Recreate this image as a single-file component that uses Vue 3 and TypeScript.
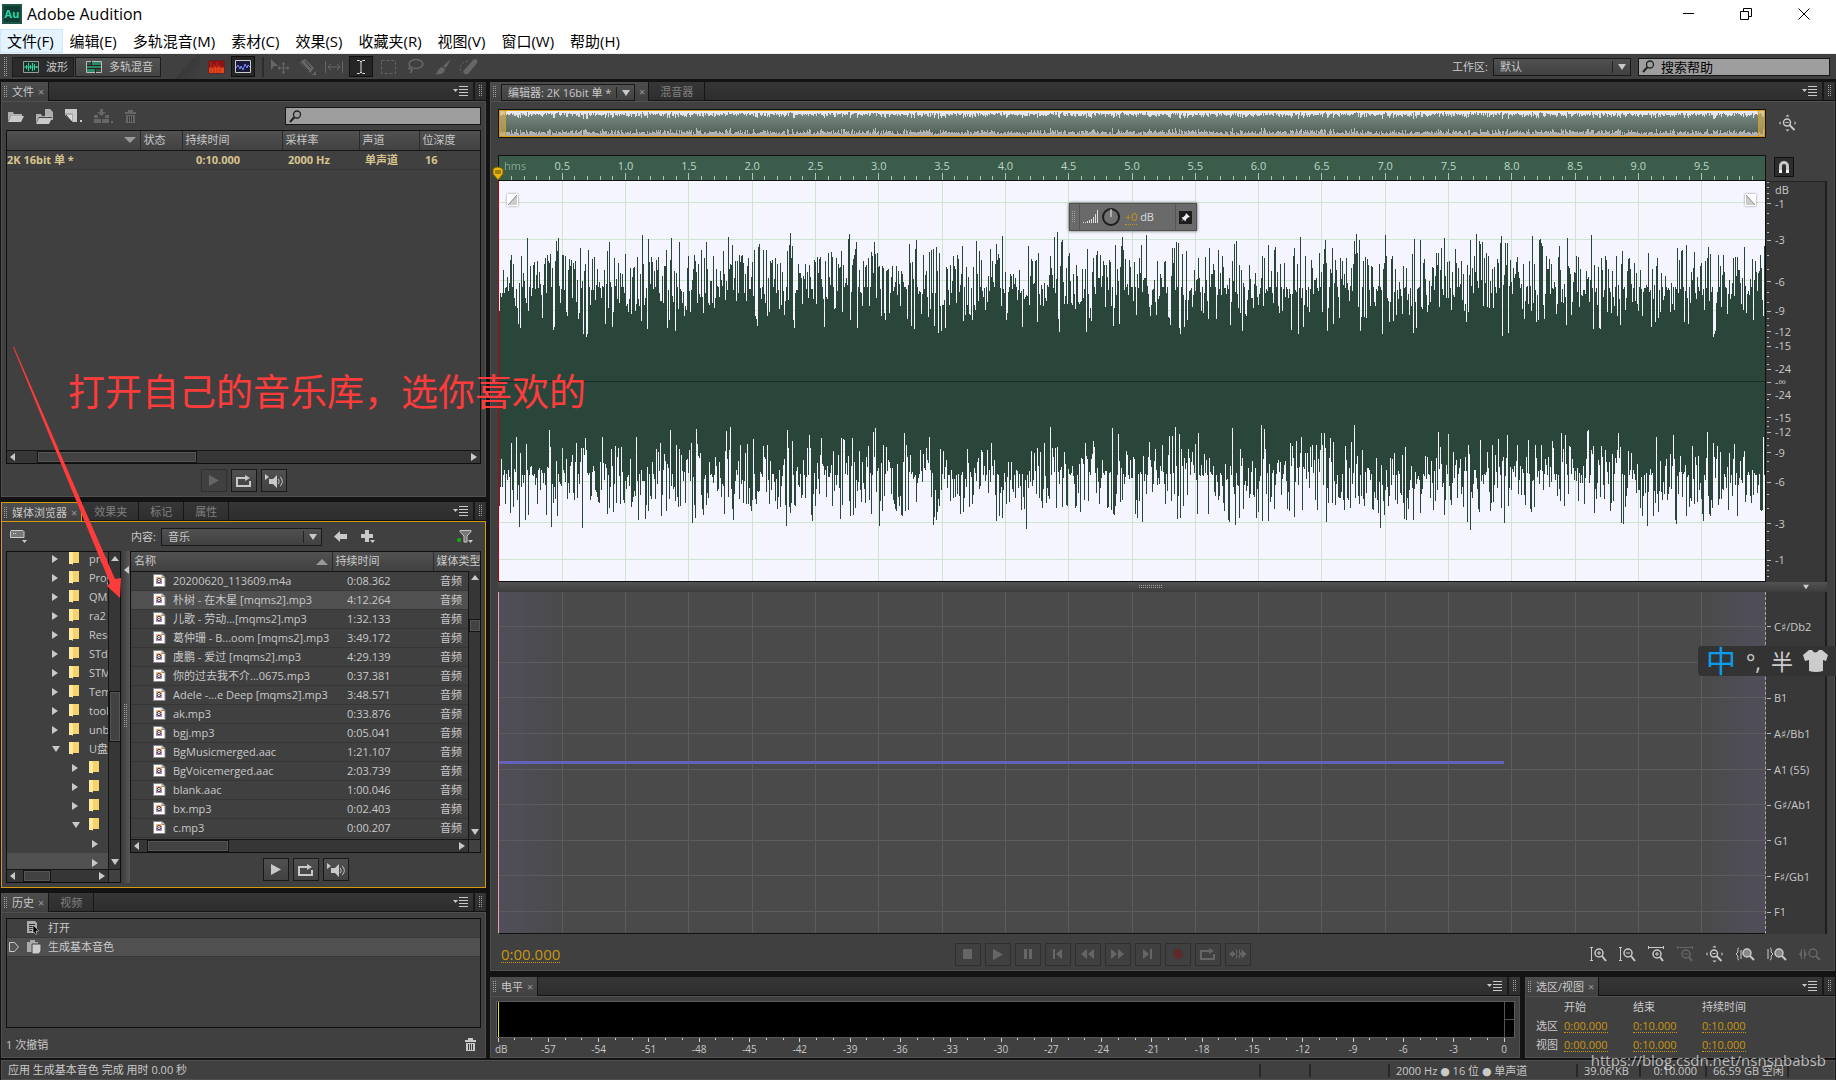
<script setup lang="ts">
import { h } from 'vue'

const icons: Record<string, string> = {
  min: '<path d="M0 5.500h11" stroke="currentColor" fill="none"/>',
  max: '<path d="M.5 3.500h8v8h-8zM3.500 3.500v-3h8v8h-3" stroke="currentColor" fill="none"/>',
  close: '<path d="M.5.5l11 11M11.500.5l-11 11" stroke="currentColor" fill="none"/>',
  wave: '<path d="M.5.500h15v11h-15z" fill="#17352a" stroke="#999"/><path d="M1 6h14M3.500 4v4M5.500 2v8M7.500 4v4M9.500 2v8M11.500 3v6M13.500 5v2" stroke="#35d19a" fill="none"/>',
  multi: '<path d="M.5.500h15v11h-15z" fill="#2a8a66" stroke="#bbb"/><path d="M1 4h14v1H1zM1 7h14v1H1zM5 0h1v4H5zM9 8h1v4H9z" fill="#222"/><path d="M1 1h4v3H1zM10 8h5v3h-5z" fill="#3d4d46"/>',
  spectral: '<path d="M0 0h17v14H0z" fill="#8e1212"/><path d="M1 8l2-1 2 1 2-2 2 2 2-2 2 2 2-1 1 1v5H1z" fill="#e0481b"/><path d="M3 2v11M6 4v9M9 2v11M12 5v8" stroke="#c22c14" fill="none"/><path d="M.5.500h16v13H.5z" fill="none" stroke="#5e2626"/>',
  wavebtn: '<path d="M.5.500h15v12h-15z" fill="#191a3a" stroke="#ccc"/><path d="M1 8l2-3 2 4 1-3 2 4 2-6 2 4 1-3 2 2" stroke="#7b8cff" fill="none"/>',
  move: '<path d="M0 1l7 7H3l-3 4z"/><path d="M12.500 5v10M7.500 10h10" stroke="currentColor"/><path d="M10.500 6.500l2-2.500 2 2.500zM10.500 13.500l2 2.500 2-2.500zM9 8l-2.500 2L9 12zM16 8l2.500 2-2.500 2z"/>',
  razor: '<path d="M1 4l6-3 9 9-4 5z"/><path d="M0 1l5 6M7 3l6 7M5 7l6 6" stroke="#333" fill="none"/><path d="M18 13v4h-4z"/>',
  slip: '<path d="M.5 2v12M17.500 2v12M3 8h12M6 5L3 8l3 3M12 5l3 3-3 3" stroke="currentColor" fill="none"/>',
  ibeam: '<path d="M1 1.500h2.500L5 3v10l-1.500 1.500H1M9 1.500H6.500L5 3M5 13l1.500 1.500H9" stroke="currentColor" fill="none"/>',
  marquee: '<path d="M.5.500h14v13H.5z" stroke="currentColor" fill="none" stroke-dasharray="3 2"/>',
  lasso: '<ellipse cx="9" cy="5" rx="7" ry="4.500" fill="none" stroke="currentColor" stroke-width="1.500"/><path d="M3 8c-2 1-1 3 1 2 2 0 1 2-1 4" fill="none" stroke="currentColor" stroke-width="1.500"/>',
  brush: '<path d="M17 0l-5 9-3-2zM8 8l3 2c0 4-4 6-10 5 3-1 3-6 7-7z"/>',
  heal: '<path d="M8 8L14 1c2-2 6 0 4 3l-8 10c-3 3-7 0-5-3z"/><path d="M9 2c-5 1-8 4-8 8 0 2 1 3 2 4" fill="none" stroke="currentColor" stroke-dasharray="2 2"/>',
  search: '<circle cx="8" cy="4.500" r="3.500" fill="none" stroke="currentColor" stroke-width="1.300"/><path d="M5.500 7L1 12" stroke="currentColor" stroke-width="2"/>',
  menu: '<path d="M0 3h5L2.500 6z"/><path d="M6 .5h9M6 3.500h9M6 6.500h9M6 9.500h9" stroke="currentColor" fill="none" shape-rendering="crispEdges"/>',
  folder: '<path d="M0 2h5l1 2h8v2H3L0 11z" opacity=".8"/><path d="M3 6h13l-3 6H0z"/>',
  folderdoc: '<path d="M0 5h5l1 2h7v1H3L0 14z" opacity=".8"/><path d="M3 9h13l-3 6H0z"/><path d="M9 0h5l3 3v8h-2l1-3H9z" opacity=".8"/>',
  newfile: '<path d="M0 0h12v13H7L0 6z" fill="#aaa"/><path d="M0 0h12v13H8V4H0z"/><path d="M1 6l6 7V6z" fill="#ddd"/><path d="M1 6l6 7" stroke="#333"/><path d="M15 11h2v2h-2z"/>',
  insert: '<path d="M6 0h3v3h3L7.500 7 3 3h3zM0 6h4v3H0zM0 10h7v4H0zM8 10h7v4H8zM11 6h4v3h-4z"/><path d="M17 12h2v2h-2z"/>',
  trash: '<path d="M3 0h5v2h3v2H0V2h3zM1 5h9v8H1z"/><path d="M3.500 6v6M5.500 6v6M7.500 6v6" stroke="#3a3a3a"/>',
  play: '<path d="M0 0l10 5.500L0 11z"/>',
  loop: '<path d="M8 3H1v8h13V6" fill="none" stroke="currentColor" stroke-width="2"/><path d="M6 2h3V0l5 3-5 3V4H6z"/>',
  autoplay: '<path d="M0 0l4 3-4 3zM4 5h4l4-4v13L8 10H4z"/><path d="M13 5c1.500 1 1.500 4 0 5M15 3c3 2 3 7 0 9" stroke="currentColor" fill="none"/>',
  stop: '<path d="M0 0h9v10H0z"/>',
  pause: '<path d="M0 0h3v10H0zM5 0h3v10H5z"/>',
  first: '<path d="M0 0h2v10H0zM9 0v10L3 5z"/>',
  rew: '<path d="M6 0v10L0 5zM13 0v10L7 5z"/>',
  ff: '<path d="M0 0v10l6-5zM7 0v10l6-5z"/>',
  last: '<path d="M0 0v10l6-5zM7 0h2v10H7z"/>',
  rec: '<circle cx="5" cy="5" r="5" fill="#5e2a2a"/>',
  skip: '<path d="M0 4h2V2l3 3-3 3V6H0zM10 4h2V1l4 4-4 4V6h-2zM6 0l1 3-1 2 1 2-1 3M10 0L9 3l1 2-1 2 1 3" stroke="currentColor" stroke-width=".8"/>',
  drive: '<path d="M1 .5h12l1 1v6H.5v-6z" fill="#777" stroke="#ccc"/><path d="M3 3h1v1H3zM5 3h1v1H5z" fill="#ddd"/><path d="M12 10h5l-2.500 3z"/>',
  back: '<path d="M6 0v3h7v5H6v3L0 5.500z"/>',
  plus: '<path d="M4 0h4v4h4v4H8v4H4V8H0V4h4z"/><path d="M9 10h5l-2.500 3z"/>',
  filter: '<path d="M3 .5h11v1L10 6v6H7V6L3 1.500z" fill="#777" stroke="currentColor"/><circle cx="2" cy="10" r="2" fill="#12b012"/><path d="M11 10h5l-2.500 3z"/>',
  tri: '<path d="M0 0l6 4-6 4z"/>',
  left: '<path d="M5 0v8L0 4z"/>',
  down: '<path d="M0 0h8L4 6z"/>',
  up: '<path d="M0 5h8L4 0z"/>',
  upwide: '<path d="M0 6h12L6 0z" fill="#999"/>',
  downwide: '<path d="M0 0h12L6 6z" fill="#999"/>',
  fold: '<path d="M3 0h7v11H3z" fill="#f5d26a"/><path d="M0 0h3l1 1v12l-1-1H0z" fill="#ffe9a2"/>',
  media: '<path d="M.5.500h8.500l3 3v9H.5z" fill="#fff" stroke="#888"/><path d="M9 .5v3h3" fill="none" stroke="#888"/><path d="M3 3h6v3H3z" fill="#f2b27c"/><path d="M3 7h6v3H3z" fill="#b08ab8"/><circle cx="6" cy="6.500" r="2" fill="#fff" stroke="#3a2a3a"/><path d="M5.500 6h1v1h-1z" fill="#222"/>',
  open: '<path d="M0 0h8l2 2v10H0z" fill="#aaa"/><path d="M2 3.500h6M2 5.500h5M2 7.500h4M2 9.500h3" stroke="#333"/><path d="M6 4l6 6H9l1 3H8l-1-2-1 1z" fill="#000" stroke="#ddd" stroke-width=".5"/>',
  paste: '<path d="M0 2h3V0h5v2h3v10H0z" fill="#aaa"/><path d="M5 4h9v7l-2 3H5z" fill="#ccc" stroke="#444"/>',
  marker: '<path d="M.5.500h5l4 4.500-4 4.500h-5z" fill="#555" stroke="#ccc"/>',
  bars: '<path d="M.5 13v-1M2.500 13v-1M4.500 13v-2M6.500 13v-3M8.500 13V9M10.500 13V7M12.500 13V4M14.500 13V0" stroke="#ddd"/>',
  knob: '<circle cx="9" cy="9" r="8" fill="#707070" stroke="#1c1c1c" stroke-width="2"/><path d="M9 1v8" stroke="#eee"/>',
  pin: '<path d="M5 0l4 4-2 .5-2 2-.5 2L2.500 6.500 0 9l2-3L.5 4.500l2-.5 2-2z"/>',
  magnet: '<path d="M1.500 11V5a3.500 3.500 0 017 0v6" fill="none" stroke="currentColor" stroke-width="3"/><path d="M0 9h3v3H0zM7 9h3v3H7z" fill="#fff"/>',
  fadein: '<path d="M0 0h11v12H0z" fill="#fff"/><path d="M10 1v10H1z" fill="#ccc"/><path d="M1 11L10 1" stroke="#888"/>',
  fadeout: '<path d="M0 0h11v12H0z" fill="#fff"/><path d="M1 1v10h9z" fill="#ccc"/><path d="M1 1l9 10" stroke="#888"/>',
  head: '<path d="M1 3q4-4 10 0v5l-5 6-5-6z" fill="#e8b80c" stroke="#7a5c00"/><path d="M4 4v4M6 4v4M8 4v4" stroke="#5a4400"/>',
  zinV: '<path d="M1.500 1v14M0 1.500h3M0 14.500h3" stroke="currentColor"/><circle cx="9" cy="7" r="4" fill="none" stroke="currentColor" stroke-width="1.500"/><path d="M12 10l4 5" stroke="currentColor" stroke-width="2"/><path d="M7 7h4M9 5v4" stroke="currentColor"/>',
  zoutV: '<path d="M1.500 1v14M0 1.500h3M0 14.500h3" stroke="currentColor"/><circle cx="9" cy="7" r="4" fill="none" stroke="currentColor" stroke-width="1.500"/><path d="M12 10l4 5" stroke="currentColor" stroke-width="2"/><path d="M7 7h4" stroke="currentColor"/>',
  zinH: '<path d="M0 1.500h16M.5 0v3M15.500 0v3" stroke="currentColor"/><circle cx="9" cy="8" r="4" fill="none" stroke="currentColor" stroke-width="1.500"/><path d="M12 11l3 4" stroke="currentColor" stroke-width="2"/><path d="M7 8h4M9 6v4" stroke="currentColor"/>',
  zoutH: '<path d="M0 1.500h16M.5 0v3M15.500 0v3" stroke="currentColor"/><circle cx="9" cy="8" r="4" fill="none" stroke="currentColor" stroke-width="1.500"/><path d="M12 11l3 4" stroke="currentColor" stroke-width="2"/><path d="M7 8h4" stroke="currentColor"/>',
  zfull: '<path d="M6.500 1.500L8.500-.5l2 2zM1.500 6v4L0 8zM15.500 6v4L17 8zM6.500 14.500h4l-2 2z"/><circle cx="8" cy="7.500" r="3.500" fill="none" stroke="currentColor" stroke-width="1.500"/><path d="M10.500 10l5 5" stroke="currentColor" stroke-width="2"/><path d="M6.500 7.500h3" stroke="currentColor"/>',
  zselL: '<path d="M4 2c-2 0-1 3-1 4L1 8l2 2c0 1-1 4 1 4" fill="none" stroke="currentColor"/><path d="M5 4h2v9H5z" fill="#888"/><circle cx="12" cy="7" r="4" fill="#888" stroke="currentColor" stroke-width="1.500"/><path d="M15 10l4 4" stroke="currentColor" stroke-width="2"/>',
  zselR: '<path d="M3 2c2 0 1 3 1 4l2 2-2 2c0 1 1 4-1 4" fill="none" stroke="currentColor"/><path d="M0 3h2v10H0z" fill="#888"/><circle cx="12" cy="7" r="4" fill="#888" stroke="currentColor" stroke-width="1.500"/><path d="M15 10l4 4" stroke="currentColor" stroke-width="2"/>',
  zsel: '<path d="M0 8l2-3v6zM2 3h1v10H2zM5 3h1v10H5zM8 8L6 5v6z" /><circle cx="14" cy="7" r="4" fill="none" stroke="currentColor" stroke-width="1.500"/><path d="M17 10l4 4" stroke="currentColor" stroke-width="2"/>',
  shirt: '<path d="M0 5L6 0h3q3 5 7 0h3l6 5-2 6-3-1v11q-7 2-14 0V10l-4 1z"/>',
}

const Icon = (p: { name: string; w: number; h: number }) =>
  h('svg', {
    class: 'ico', width: p.w, height: p.h, viewBox: `0 0 ${p.w} ${p.h}`,
    fill: 'currentColor', 'aria-hidden': 'true', innerHTML: icons[p.name],
  })
Icon.props = ['name', 'w', 'h']

const menus = ['文件(F)', '编辑(E)', '多轨混音(M)', '素材(C)', '效果(S)', '收藏夹(R)', '视图(V)', '窗口(W)', '帮助(H)']

const files = [
  ['20200620_113609.m4a', '0:08.362'],
  ['朴树 - 在木星 [mqms2].mp3', '4:12.264'],
  ['儿歌 - 劳动...[mqms2].mp3', '1:32.133'],
  ['葛仲珊 - B...oom [mqms2].mp3', '3:49.172'],
  ['虞鹏 - 爱过 [mqms2].mp3', '4:29.139'],
  ['你的过去我不介...0675.mp3', '0:37.381'],
  ['Adele -...e Deep [mqms2].mp3', '3:48.571'],
  ['ak.mp3', '0:33.876'],
  ['bgj.mp3', '0:05.041'],
  ['BgMusicmerged.aac', '1:21.107'],
  ['BgVoicemerged.aac', '2:03.739'],
  ['blank.aac', '1:00.046'],
  ['bx.mp3', '0:02.403'],
  ['c.mp3', '0:00.207'],
]

const tree = [
  { t: 'pro', l: 0 }, { t: 'Prog', l: 0 }, { t: 'QM', l: 0 }, { t: 'ra2', l: 0 },
  { t: 'Reso', l: 0 }, { t: 'STdi', l: 0 }, { t: 'STM', l: 0 }, { t: 'Tem', l: 0 },
  { t: 'tool', l: 0 }, { t: 'unb', l: 0 }, { t: 'U盘', l: 0, open: true },
  { t: '', l: 1 }, { t: '', l: 1 }, { t: '', l: 1 }, { t: '', l: 1, open: true },
  { t: '', l: 2 }, { t: '', l: 2, sel: true },
]

const rand = (n: number) => {
  const v = Math.sin(n * 12.9898) * 43758.5453
  return v - Math.floor(v)
}

// One filled column per pixel: irregular peaks and dips around a steady body.
const COLS = 1265
function column(i: number, seed: number, body: number, up: number, dip: number) {
  const swing = 0.78 + 0.22 * Math.cos((i * Math.PI * 2) / 29.7 + seed)
  const r = rand(i * 1.7 + seed * 31)
  return rand(i + seed * 97) > 0.5
    ? Math.round(body + up * swing * r)
    : Math.round(body - dip * swing * r * r)
}
function outline(body: number, up: number, dip: number) {
  let top = 'M0 0'
  let bottom = 'M0 0'
  for (let i = 0; i < COLS; i++) {
    top += `V${-column(i, 1, body, up, dip)}H${i + 1}`
    bottom += `V${column(i, 2, body, up, dip)}H${i + 1}`
  }
  return `${top}V0Z${bottom}V0Z`
}
const wavePath = outline(94, 56, 52)
const overviewPath = outline(8, 3, 4)

const seconds = Array.from({ length: 19 }, (_, i) => ((i + 1) / 2).toFixed(1))
const tenths = Array.from({ length: 99 }, (_, i) => i + 1)
const halves = Array.from({ length: 19 }, (_, i) => (i + 1) * 5)

const place = (db: number, side: number) => 50 + side * 50 * Math.pow(10, db / 20)
const dbMarks = [-1, -3, -6, -9, -12, -15, -24].flatMap((v) => [
  { v: String(v), y: place(v, -1) }, { v: String(v), y: place(v, 1) },
]).concat([{ v: '-∞', y: 50 }])
const dbMinor = [0, -0.25, -0.5, -0.75, -1.5, -2, -2.5, -4, -5, -7, -8, -10, -11, -13, -14, -18, -21].flatMap((v) => [place(v, -1), place(v, 1)])

const notes = ['C♯/Db2', '', 'B1', 'A♯/Bb1', 'A1 (55)', 'G♯/Ab1', 'G1', 'F♯/Gb1', 'F1']
const noteLine = (i: number) => 10.2 + i * 10.43

const levels = Array.from({ length: 19 }, (_, i) => String(-57 + i * 3))
const levelTicks = Array.from({ length: 61 }, (_, i) => i)

const transport: [string, string, number, number][] = [
  ['停止', 'stop', 9, 10], ['播放', 'play', 10, 11], ['暂停', 'pause', 8, 10], ['移到开头', 'first', 9, 10],
  ['倒放', 'rew', 13, 10], ['快进', 'ff', 13, 10], ['移到结尾', 'last', 9, 10], ['录音', 'rec', 10, 10],
  ['循环播放', 'loop', 15, 12], ['跳过选区', 'skip', 16, 10],
]
const zooms: [string, string, number, boolean][] = [
  ['放大幅度', 'zinV', 17, false], ['缩小幅度', 'zoutV', 17, false], ['放大时间', 'zinH', 17, false],
  ['缩小时间', 'zoutH', 17, true], ['全部缩小', 'zfull', 17, false], ['放大入点', 'zselL', 20, false],
  ['放大出点', 'zselR', 20, false], ['放大选区', 'zsel', 22, true],
]
</script>

<template>
  <div class="app">
    <header class="title">
      <span class="logo">Au</span>
      <span class="name">Adobe Audition</span>
      <button aria-label="最小化"><Icon name="min" :w="11" :h="12" /></button>
      <button aria-label="还原"><Icon name="max" :w="12" :h="12" /></button>
      <button aria-label="关闭"><Icon name="close" :w="12" :h="12" /></button>
    </header>
    <nav class="menubar">
      <button v-for="(m, i) in menus" :key="m" :class="{ on: i === 0 }">{{ m }}</button>
    </nav>

    <div class="toolbar">
      <i class="grip"></i>
      <div class="modes">
        <button class="mode on"><Icon name="wave" :w="16" :h="12" />波形</button>
        <button class="mode"><Icon name="multi" :w="16" :h="12" />多轨混音</button>
      </div>
      <i class="slope"></i>
      <div class="tools">
        <button class="tool" aria-label="频谱"><Icon name="spectral" :w="17" :h="14" /></button>
        <button class="tool on" aria-label="波形显示"><Icon name="wavebtn" :w="16" :h="13" /></button>
        <i class="vsep"></i>
        <button class="tool" disabled aria-label="移动"><Icon name="move" :w="19" :h="17" /></button>
        <button class="tool" disabled aria-label="切刀"><Icon name="razor" :w="18" :h="17" /></button>
        <button class="tool" disabled aria-label="滑动"><Icon name="slip" :w="18" :h="16" /></button>
        <button class="tool on" aria-label="时间选择"><Icon name="ibeam" :w="10" :h="16" /></button>
        <button class="tool" disabled aria-label="选框"><Icon name="marquee" :w="15" :h="14" /></button>
        <button class="tool" disabled aria-label="套索"><Icon name="lasso" :w="17" :h="15" /></button>
        <button class="tool" disabled aria-label="画笔"><Icon name="brush" :w="17" :h="15" /></button>
        <button class="tool" disabled aria-label="修复"><Icon name="heal" :w="20" :h="16" /></button>
      </div>
      <label class="wslabel" for="ws">工作区:</label>
      <span class="combo ws"><select id="ws"><option>默认</option></select><Icon name="down" :w="8" :h="6" /></span>
      <span class="search help"><Icon name="search" :w="13" :h="13" /><input value="搜索帮助" aria-label="搜索帮助" /></span>
    </div>

    <main class="work">
      <div class="side">
        <section class="panel">
          <div class="tabs">
            <button class="tab on"><i class="grip"></i>文件<span class="x">×</span></button>
            <span class="fill"></span>
            <button class="pmenu" aria-label="面板菜单"><Icon name="menu" :w="15" :h="10" /></button>
            <span class="end"><i class="grip"></i></span>
          </div>
          <div class="body">
            <div class="fbar">
              <button aria-label="打开文件"><Icon name="folder" :w="16" :h="12" /></button>
              <button aria-label="导入文件"><Icon name="folderdoc" :w="17" :h="15" /></button>
              <button aria-label="新建文件"><Icon name="newfile" :w="17" :h="14" /></button>
              <button aria-label="插入到多轨" disabled><Icon name="insert" :w="19" :h="14" /></button>
              <button aria-label="删除" disabled><Icon name="trash" :w="11" :h="13" /></button>
              <span class="search"><Icon name="search" :w="13" :h="13" /><input aria-label="搜索文件" /></span>
            </div>
            <div class="well">
              <table class="ftable">
                <colgroup><col class="c1" /><col class="c2" /><col class="c3" /><col class="c4" /><col class="c5" /><col /></colgroup>
                <thead>
                  <tr><th class="sort"><Icon name="downwide" :w="12" :h="6" /></th><th>状态</th><th>持续时间</th><th>采样率</th><th>声道</th><th>位深度</th></tr>
                </thead>
                <tbody>
                  <tr><td class="n">2K 16bit 单 *</td><td></td><td class="d">0:10.000</td><td>2000 Hz</td><td>单声道</td><td>16</td></tr>
                </tbody>
              </table>
              <div class="hs"><Icon name="left" :w="5" :h="8" /><span class="thumb t160"></span><Icon name="tri" :w="6" :h="8" /></div>
            </div>
            <div class="preview f">
              <button disabled aria-label="播放"><Icon name="play" :w="10" :h="11" /></button>
              <button aria-label="循环"><Icon name="loop" :w="15" :h="12" /></button>
              <button aria-label="自动播放"><Icon name="autoplay" :w="18" :h="14" /></button>
            </div>
          </div>
        </section>

        <section class="panel focus">
          <div class="tabs">
            <button class="tab on"><i class="grip"></i>媒体浏览器<span class="x">×</span></button>
            <button class="tab">效果夹</button>
            <button class="tab">标记</button>
            <button class="tab">属性</button>
            <span class="fill"></span>
            <button class="pmenu" aria-label="面板菜单"><Icon name="menu" :w="15" :h="10" /></button>
            <span class="end"><i class="grip"></i></span>
          </div>
          <div class="body">
            <div class="mbar">
              <button class="drv" aria-label="驱动器"><Icon name="drive" :w="17" :h="13" /></button>
              <label for="content">内容:</label>
              <span class="combo"><select id="content"><option>音乐</option></select><Icon name="down" :w="8" :h="6" /></span>
              <button aria-label="后退"><Icon name="back" :w="13" :h="11" /></button>
              <button aria-label="添加"><Icon name="plus" :w="14" :h="13" /></button>
              <button class="flt" aria-label="筛选"><Icon name="filter" :w="16" :h="13" /></button>
            </div>
            <div class="browse">
              <div class="tree">
                <div class="treemain">
                  <ul>
                    <li v-for="(n, i) in tree" :key="i" :class="['l' + n.l, { sel: n.sel }]">
                      <span class="tw"><Icon v-if="n.open" name="down" :w="8" :h="6" /><Icon v-else name="tri" :w="6" :h="8" /></span>
                      <Icon v-if="n.l < 2" name="fold" :w="11" :h="13" />
                      <span class="tn">{{ n.t }}</span>
                    </li>
                  </ul>
                  <div class="vs tall"><Icon name="up" :w="8" :h="5" /><span class="thumb"></span><Icon name="down" :w="8" :h="6" /></div>
                </div>
                <div class="hs"><Icon name="left" :w="5" :h="8" /><span class="thumb t28"></span><Icon name="tri" :w="6" :h="8" /><span class="corner"></span></div>
              </div>
              <div class="split"><Icon name="left" :w="4" :h="8" /><i class="grip"></i></div>
              <div class="list">
                <div class="well">
                  <div class="lmain">
                    <table class="mtable">
                      <colgroup><col class="m1" /><col class="m2" /><col /></colgroup>
                      <thead><tr><th>名称<Icon name="upwide" :w="12" :h="6" /></th><th>持续时间</th><th>媒体类型</th></tr></thead>
                      <tbody>
                        <tr v-for="(f, i) in files" :key="f[0]" :class="{ sel: i === 1 }">
                          <td class="fn"><Icon name="media" :w="13" :h="13" />{{ f[0] }}</td>
                          <td class="fd">{{ f[1] }}</td>
                          <td class="ft">音频</td>
                        </tr>
                      </tbody>
                    </table>
                    <div class="vs short"><Icon name="up" :w="8" :h="5" /><span class="thumb"></span><Icon name="down" :w="8" :h="6" /></div>
                  </div>
                  <div class="hs"><Icon name="left" :w="5" :h="8" /><span class="thumb t80"></span><Icon name="tri" :w="6" :h="8" /><span class="corner"></span></div>
                </div>
                <div class="preview">
                  <button aria-label="播放"><Icon name="play" :w="10" :h="11" /></button>
                  <button aria-label="循环"><Icon name="loop" :w="15" :h="12" /></button>
                  <button aria-label="自动播放"><Icon name="autoplay" :w="18" :h="14" /></button>
                </div>
              </div>
            </div>
          </div>
        </section>

        <section class="panel">
          <div class="tabs">
            <button class="tab on"><i class="grip"></i>历史<span class="x">×</span></button>
            <button class="tab">视频</button>
            <span class="fill"></span>
            <button class="pmenu" aria-label="面板菜单"><Icon name="menu" :w="15" :h="10" /></button>
            <span class="end"><i class="grip"></i></span>
          </div>
          <div class="body hist">
            <ol>
              <li><span class="mk"></span><Icon name="open" :w="14" :h="14" />打开</li>
              <li class="sel"><span class="mk"><Icon name="marker" :w="10" :h="10" /></span><Icon name="paste" :w="14" :h="14" />生成基本音色</li>
            </ol>
            <div class="undo"><span>1 次撤销</span><button aria-label="删除历史"><Icon name="trash" :w="11" :h="13" /></button></div>
          </div>
        </section>
      </div>

      <div class="center">
        <section class="panel editor">
          <div class="tabs">
            <div class="tab on ed"><i class="grip"></i>
              <span class="combo"><select aria-label="编辑器文件"><option>编辑器: 2K 16bit 单 *</option></select><Icon name="down" :w="8" :h="6" /></span>
              <span class="x">×</span></div>
            <button class="tab">混音器</button>
            <span class="fill"></span>
            <button class="pmenu" aria-label="面板菜单"><Icon name="menu" :w="15" :h="10" /></button>
            <span class="end"><i class="grip"></i></span>
          </div>
          <div class="body">
            <div class="line over">
              <div class="overview">
                <svg :viewBox="`0 -13 ${COLS} 26`" preserveAspectRatio="none" aria-hidden="true">
                  <defs>
                    <linearGradient id="og" x1="0" y1="0" x2="0" y2="1"><stop offset="0" stop-color="#7b8d84" /><stop offset="1" stop-color="#515f57" /></linearGradient>
                  </defs>
                  <path :d="overviewPath" fill="url(#og)" shape-rendering="crispEdges" />
                </svg>
                <i class="handle"></i><i class="handle r"></i>
              </div>
              <div class="axisw"><button class="bare" aria-label="缩放全部"><Icon name="zfull" :w="17" :h="17" /></button></div>
            </div>
            <div class="line">
              <div class="ruler">
                <svg width="100%" height="100%" aria-hidden="true" shape-rendering="crispEdges">
                  <line v-for="t in tenths" :key="t" :x1="t + '%'" :x2="t + '%'" :y1="t % 5 ? 20 : 17" y2="25" stroke="#a9c6b6" />
                </svg>
                <div class="secs"><span v-for="s in seconds" :key="s">{{ s }}</span></div>
                <span class="hms">hms</span>
                <Icon class="head" name="head" :w="12" :h="15" />
              </div>
              <div class="axisw snap"><button aria-label="对齐"><Icon name="magnet" :w="10" :h="12" /></button></div>
            </div>
            <div class="line waverow">
              <div class="wave">
                <svg class="full" width="100%" height="100%" aria-hidden="true" shape-rendering="crispEdges">
                  <line v-for="t in halves" :key="t" :x1="t + '%'" :x2="t + '%'" y1="0" y2="100%" stroke="#cfe5d0" />
                  <line v-for="(d, i) in dbMarks" :key="i" x1="0" x2="100%" :y1="d.y + '%'" :y2="d.y + '%'" stroke="#cfe5d0" />
                </svg>
                <svg class="full" :viewBox="`0 -200 ${COLS} 400`" preserveAspectRatio="none" width="100%" height="100%" aria-hidden="true">
                  <path :d="wavePath" fill="#274338" fill-opacity=".985" shape-rendering="crispEdges" />
                  <path :d="`M0 .5H${COLS}`" stroke="#1a2d25" shape-rendering="crispEdges" />
                </svg>
                <Icon class="fade a" name="fadein" :w="11" :h="12" />
                <Icon class="fade b" name="fadeout" :w="11" :h="12" />
                <div class="hud">
                  <i class="grip"></i><i class="hsep"></i>
                  <Icon name="bars" :w="16" :h="14" />
                  <Icon name="knob" :w="18" :h="18" />
                  <span class="gain"><a href="#">+0</a> dB</span>
                  <i class="hsep"></i>
                  <button aria-label="固定"><Icon name="pin" :w="9" :h="9" /></button>
                </div>
              </div>
              <div class="axisw scale">
                <svg width="13" height="100%" aria-hidden="true" shape-rendering="crispEdges">
                  <line v-for="(y, i) in dbMinor" :key="'m' + i" x1="1" x2="3" :y1="y + '%'" :y2="y + '%'" stroke="#bbb" />
                  <line v-for="(d, i) in dbMarks" :key="i" x1="1" x2="5" :y1="d.y + '%'" :y2="d.y + '%'" stroke="#bbb" />
                </svg>
                <span class="unit">dB</span>
                <span v-for="(d, i) in dbMarks" :key="i" class="db" :style="{ top: d.y + '%' }">{{ d.v }}</span>
              </div>
            </div>
            <div class="bar"><i class="grip"></i><Icon name="down" :w="8" :h="6" /></div>
            <div class="line pitchrow">
              <div class="pitch">
                <svg width="100%" height="100%" aria-hidden="true" shape-rendering="crispEdges">
                  <line v-for="t in halves" :key="t" :x1="t + '%'" :x2="t + '%'" y1="0" y2="100%" stroke="#5c5c5e" />
                  <line v-for="(n, i) in notes" :key="i" x1="0" x2="100%" :y1="noteLine(i) + '%'" :y2="noteLine(i) + '%'" stroke="#5c5c5e" />
                  <line x1="0" x2="79.4%" y1="50%" y2="50%" stroke="#6462b8" stroke-width="3" />
                </svg>
              </div>
              <div class="axisw notes">
                <span v-for="(n, i) in notes" :key="i"><i></i>{{ n }}</span>
              </div>
            </div>
            <div class="trans">
              <a class="time" href="#">0:00.000</a>
              <div class="preview t">
                <button v-for="b in transport" :key="b[1]" disabled :aria-label="b[0]"><Icon :name="b[1]" :w="b[2]" :h="b[3]" /></button>
              </div>
              <div class="zoomset">
                <button v-for="z in zooms" :key="z[1]" class="bare" :disabled="z[3]" :aria-label="z[0]"><Icon :name="z[1]" :w="z[2]" :h="16" /></button>
              </div>
            </div>
          </div>
        </section>

        <div class="low">
          <section class="panel level">
            <div class="tabs">
              <button class="tab on"><i class="grip"></i>电平<span class="x">×</span></button>
              <span class="fill"></span>
              <button class="pmenu" aria-label="面板菜单"><Icon name="menu" :w="15" :h="10" /></button>
              <span class="end"><i class="grip"></i></span>
            </div>
            <div class="body">
              <div class="meter"><i class="floor"></i><span class="clip"><i></i><i></i></span></div>
              <div class="lscale">
                <svg width="100%" height="6" aria-hidden="true" shape-rendering="crispEdges">
                  <line v-for="t in levelTicks" :key="t" :x1="(t * 100) / 60 + '%'" :x2="(t * 100) / 60 + '%'" y1="0" :y2="t % 3 ? 2 : 4" stroke="#ccc" />
                </svg>
                <div class="lnums"><span class="u">dB</span><span v-for="l in levels" :key="l">{{ l }}</span><span class="z">0</span></div>
              </div>
            </div>
          </section>
          <section class="panel sel">
            <div class="tabs">
              <button class="tab on"><i class="grip"></i>选区/视图<span class="x">×</span></button>
              <span class="fill"></span>
              <button class="pmenu" aria-label="面板菜单"><Icon name="menu" :w="15" :h="10" /></button>
              <span class="end"><i class="grip"></i></span>
            </div>
            <div class="body">
              <table>
                <thead><tr><td></td><th>开始</th><th>结束</th><th>持续时间</th></tr></thead>
                <tbody>
                  <tr v-for="r in ['选区', '视图']" :key="r"><th>{{ r }}</th><td><a href="#">0:00.000</a></td><td><a href="#">0:10.000</a></td><td><a href="#">0:10.000</a></td></tr>
                </tbody>
              </table>
            </div>
          </section>
        </div>
      </div>
    </main>

    <footer class="status">
      <span class="msg">应用 生成基本音色 完成 用时 0.00 秒</span>
      <span class="s w50"></span><span class="s w79"></span>
      <span class="s w188">2000 Hz ● 16 位 ● 单声道</span>
      <span class="s w63">39.06 KB</span>
      <span class="s w66 r">0:10.000</span>
      <span class="s w82">66.59 GB 空闲</span>
      <span class="s w49"></span>
    </footer>

    <svg class="arrow" width="112" height="252" viewBox="-2 0 112 252" aria-hidden="true">
      <path d="M-1 0H0L101 232 107 231 106 251 93 239 96 236Z" fill="#ff3b3b" />
    </svg>
    <p class="note">打开自己的音乐库，选你喜欢的</p>
    <div class="ime"><span class="zh">中</span><span class="pt">°,</span><span class="half">半</span><Icon name="shirt" :w="25" :h="22" /></div>
    <p class="mark">https://blog.csdn.net/nsnsnbabsb</p>
  </div>
</template>

<style>
body { background: #131313; }
.ico { display: block; flex: none; overflow: visible; }
</style>

<style scoped>
* { box-sizing: border-box; }
.app {
  position: relative; display: flex; flex-direction: column; height: 100vh; min-height: 900px; overflow: hidden;
  background: #131313; color: #c9c9c9; font: 11px/18px "Open Sans", "Noto Sans CJK SC", sans-serif;
}
button { font: inherit; color: inherit; background: none; border: 0; padding: 0; margin: 0; display: flex; align-items: center; justify-content: center; white-space: nowrap; }
button:disabled { color: #666; }
input, select { font: inherit; color: inherit; background: none; border: 0; padding: 0; margin: 0; outline: 0; min-width: 0; appearance: none; border-radius: 0; }
a { color: #c8960f; text-decoration: none; border-bottom: 1px dotted #c8960f; }
table { border-collapse: collapse; table-layout: fixed; width: 100%; }
th { font-weight: 400; text-align: left; }
td, th { padding: 0; }
ul, ol, p { margin: 0; padding: 0; list-style: none; }
.grip { display: block; flex: none; width: 4px; height: 12px; background: conic-gradient(transparent 75%, #a0a0a0 0) 0 0 / 2px 2px; }

.title { display: flex; align-items: center; height: 29px; background: #fff; color: #000; padding: 0 3px 2px 2px; flex: none; }
.logo { width: 20px; height: 20px; background: #0f3d33; border: 2px solid #1f5548; color: #2bd6a0; font-size: 11px; line-height: 15px; font-weight: 700; text-align: center; margin-right: 5px; }
.title .name { flex: 1; font-size: 16px; }
.title button { width: 58px; height: 26px; }
.menubar { display: flex; height: 25px; flex: none; background: #fff; color: #000; font-size: 15px; border-bottom: 1px solid #eee; }
.menubar button { padding: 0 8px 0 6px; border: 1px solid transparent; height: 24px; }
.menubar button.on { background: #e5f3ff; border-color: #cce8ff; }

.toolbar { display: flex; align-items: center; height: 25px; flex: none; background: #404040; padding: 0 6px 0 4px; }
.toolbar > .grip { height: 20px; margin-right: 4px; }
.modes { display: flex; gap: 1px; }
.mode { height: 20px; border: 1px solid #1c1c1c; background: linear-gradient(#525252, #444); padding: 0 7px 0 10px; gap: 7px; }
.mode.on { background: #2b2b2b; padding-right: 5px; }
.slope { width: 25px; height: 25px; margin: 0 4px 0 14px; background: linear-gradient(120deg, #333, #404040); clip-path: polygon(100% 0, 70% 20%, 0 100%, 100% 100%); }
.tools { display: flex; align-items: center; gap: 3px; }
.tool { width: 24px; height: 21px; }
.tool.on { background: #262626; border: 1px solid #101010; color: #ddd; }
.vsep { width: 2px; height: 20px; background: #2c2c2c; margin: 0 1px 0 4px; }
.wslabel { margin: 0 5px 0 auto; }
.combo { position: relative; display: flex; align-items: center; height: 18px; background: linear-gradient(#505050, #414141); border: 1px solid #191919; }
.combo select { flex: 1; width: 100%; height: 16px; padding: 0 20px 0 6px; line-height: 16px; }
.combo > .ico { position: absolute; right: 4px; top: 5px; pointer-events: none; }
.combo::after { content: ""; position: absolute; right: 17px; top: 2px; bottom: 2px; border-left: 1px solid #222; }
.combo option { background: #404040; }
.ws { width: 138px; margin-right: 7px; }
.search { display: flex; align-items: center; height: 18px; background: #9e9e9e; border: 1px solid #161616; color: #222; padding: 0 3px; }
.search input { flex: 1; margin-left: 6px; height: 16px; color: #000; }
.help { width: 192px; font-size: 13px; }

.work { display: flex; flex: 1; min-height: 0; gap: 4px; padding: 3px 1px 2px; }
.side { display: grid; width: 485px; flex: none; grid-template-rows: minmax(0, 1fr) 386px 165px; gap: 5px; }
.center { flex: 1; min-width: 0; display: flex; flex-direction: column; gap: 6px; }
.panel { display: flex; flex-direction: column; background: #404040; min-height: 0; min-width: 0; }
.body { flex: 1; min-height: 0; display: flex; flex-direction: column; border: 1px solid #505050; }
.tabs { display: flex; height: 19px; flex: none; background: #404040; }
.tabs .fill, .pmenu, .end { background: linear-gradient(#363636, #2d2d2d); border-bottom: 1px solid #131313; }
.tabs .fill { flex: 1; border-left: 1px solid #161616; }
.tab { color: #808080; background: linear-gradient(#363636, #2e2e2e); border: 1px solid #161616; border-width: 0 0 1px 1px; padding: 1px 11px 0; height: 19px; }
.tab.on { color: #c9c9c9; background: linear-gradient(#4d4d4d, #404040); border: 0; border-left: 1px solid #505050; padding: 1px 4px 0 2px; gap: 4px; }
.x { color: #999; font-size: 11px; line-height: 12px; }
.pmenu { width: 25px; }
.end { width: 13px; border-left: 2px solid #191919; display: flex; align-items: center; justify-content: center; }
.focus .body { border-color: #d49a0c; }
.focus .tab.on { border-left: 1px solid #d49a0c; border-top: 1px solid #d49a0c; border-right: 1px solid #d49a0c; }

.well { display: flex; flex-direction: column; flex: 1; min-height: 0; border: 1px solid #0f0f0f; background: #404040; }
.fbar { display: flex; align-items: center; gap: 12px; padding: 5px 4px 5px 6px; }
.fbar .search { width: 196px; margin-left: auto; }
.body > .well { margin: 0 4px; }
th { height: 19px; background: linear-gradient(#515151, #414141); border-bottom: 1px solid #151515; border-left: 1px solid #2b2b2b; padding-left: 3px; white-space: nowrap; overflow: hidden; }
th:first-child { border-left: 0; }
.sort { padding-left: 117px; }
.c1 { width: 133px; } .c2 { width: 42px; } .c3 { width: 100px; } .c4 { width: 77px; } .c5 { width: 60px; }
.ftable { flex: none; }
.ftable td { color: #d8c48f; font-weight: 700; height: 19px; padding-left: 6px; border-bottom: 1px solid #353535; }
.ftable td.n { padding-left: 0; }
.ftable .d { padding-left: 14px; }
.hs { display: flex; align-items: center; height: 13px; flex: none; background: #363636; border-top: 1px solid #161616; padding: 0 3px; margin-top: auto; }
.hs > .thumb { height: 12px; background: #424242; border: 1px solid #141414; margin: 0 auto 0 8px; box-shadow: inset 0 0 0 1px #555; }
.hs > .thumb.t160 { width: 160px; margin-left: 22px; }
.thumb.t28 { width: 28px; } .thumb.t80 { width: 82px; }
.corner { width: 12px; align-self: stretch; background: #404040; border-left: 1px solid #161616; margin: 0 -3px 0 3px; }
.vs { display: flex; flex-direction: column; align-items: center; width: 12px; flex: none; background: #363636; border-left: 1px solid #161616; padding: 4px 0; }
.vs .thumb { width: 12px; background: #424242; border: 1px solid #141414; box-shadow: inset 0 0 0 1px #555; margin-bottom: auto; }
.vs.tall .thumb { height: 51px; margin-top: 130px; } .vs.short .thumb { height: 13px; margin-top: 39px; }
.preview { display: flex; justify-content: center; gap: 4px; padding: 5px 0 4px; flex: none; }
.preview button { width: 26px; height: 23px; border: 1px solid #191919; background: linear-gradient(#505050, #424242); }
.preview button:disabled { background: #404040; border-color: #2f2f2f; }

.mbar { display: flex; align-items: center; height: 29px; padding: 0 12px 0 8px; flex: none; }
.mbar .drv { width: 67px; justify-content: flex-start; margin-right: 49px; flex: none; }
.mbar label { width: 30px; margin-left: 5px; flex: none; }
.mbar .combo { width: 161px; margin-right: 12px; }
.mbar .combo + button { margin-right: 14px; }
.mbar .flt { margin-left: auto; }
.browse { display: flex; flex: 1; min-height: 0; padding: 0 4px 4px; }
.tree { width: 115px; flex: none; border: 1px solid #0f0f0f; display: flex; flex-direction: column; }
.treemain { display: flex; align-items: stretch; flex: 1; min-height: 0; overflow: hidden; }
.tree ul { flex: 1; min-width: 0; overflow: hidden; margin-top: -3px; }
.tree li { display: flex; align-items: center; height: 19px; padding-left: 45px; white-space: nowrap; }
.tree li.l1 { padding-left: 65px; } .tree li.l2 { padding-left: 85px; }
.tree li.sel, .mtable tr.sel { background: #505050; }
.tw { width: 17px; flex: none; }
.tn { margin-left: 9px; }
.split { width: 9px; flex: none; background: linear-gradient(90deg, #3a3a3a, #585858); display: flex; flex-direction: column; align-items: center; padding-top: 15px; }
.split .grip { margin-top: 130px; height: 24px; }
.list { flex: 1; min-width: 0; display: flex; flex-direction: column; }
.list .preview { padding-bottom: 2px; }
.lmain { position: relative; flex: 1; min-height: 0; overflow: hidden; }
.lmain .vs { position: absolute; right: 0; top: 19px; bottom: 0; }
.m1 { width: 201px; } .m2 { width: 101px; }
.mtable th:first-child .ico { display: inline-block; margin-left: 160px; }
.mtable td { height: 19px; border-bottom: 1px solid #363636; line-height: 18px; white-space: nowrap; overflow: hidden; }
.fn { padding-left: 22px; }
.fn .ico { display: inline-block; vertical-align: -2px; margin-right: 7px; }
.fd { padding-left: 15px; } .ft { padding-left: 7px; }

.hist { padding: 5px 4px 0; }
.hist ol { flex: 1; border: 1px solid #0f0f0f; }
.hist li { display: flex; align-items: center; height: 19px; border-bottom: 1px solid #383838; gap: 7px; }
.hist .mk { width: 13px; padding-left: 2px; }
.hist li.sel { background: #505050; }
.undo { display: flex; justify-content: space-between; align-items: center; height: 29px; padding: 4px 5px 0 0; }

.ed .combo { width: 134px; height: 17px; }
.ed .combo select { height: 15px; line-height: 15px; }
.tabs .tab.ed { display: flex; align-items: center; padding-right: 3px; }
.editor { flex: 1; }
.editor > .body { padding: 7px; }
.line { display: flex; flex: none; }
.line > :first-child { flex: 1; min-width: 0; }
.axisw { width: 61px; flex: none; }
.over { margin-bottom: 17px; }
.overview { position: relative; height: 29px; border: 1px solid #111; background: linear-gradient(#efeff3, #a9a9ad); box-shadow: inset 0 0 0 1px #dba01a; }
.overview svg { display: block; width: 100%; height: 27px; }
.handle { position: absolute; left: 0; top: 0; bottom: 0; width: 7px; border: 1px solid #d29a17; background: #d6b35c99; }
.handle.r { left: auto; right: 0; }
.over .axisw { padding: 6px 0 0 13px; }
.ruler { position: relative; height: 26px; background: #3c5c4b; border: 1px solid #111; color: #b9d8c6; }
.ruler svg { display: block; }
.secs { position: absolute; inset: 1px 0 auto; display: flex; padding: 0 2.5%; }
.secs span { flex: 1; text-align: center; }
.hms { position: absolute; left: 5px; top: 1px; opacity: .6; }
.ruler .head { position: absolute; left: -7px; top: 10px; z-index: 2; }
.snap { padding-left: 8px; }
.snap button { width: 20px; height: 20px; border: 1px solid #111; background: #2c2c2c; margin-top: 2px; }
.waverow { flex: 401; min-height: 0; }
.pitchrow { flex: 342; min-height: 0; }
.wave { position: relative; background: #f5f5ff; border: 1px solid #111; border-top: 0; border-left-color: #c00000; }
.full { position: absolute; inset: 0; }
.fade { position: absolute; top: 13px; filter: drop-shadow(0 0 1px #888); }
.fade.a { left: 8px; } .fade.b { right: 9px; }
.hud { position: absolute; top: 22px; left: 45%; width: 128px; height: 28px; display: flex; align-items: center; gap: 3px; padding: 0 4px 0 2px; background: #6a6a6a; border: 1px solid #505050; box-shadow: 0 0 3px #555; }
.hsep { width: 1px; align-self: stretch; background: #555; }
.hud .gain { flex: 1; color: #ddd; margin-left: 2px; line-height: 14px; }
.hud button { width: 13px; height: 13px; background: #1c1c1c; color: #eee; }
.scale { position: relative; background: #383838; border-top: 1px solid #222; border-right: 2px solid #1d1d1d; }
.unit { position: absolute; left: 9px; top: -1px; }
.db { position: absolute; left: 9px; transform: translateY(-50%); }
.bar { display: flex; align-items: center; height: 10px; flex: none; background: linear-gradient(#525252, #3c3c3c); padding-right: 18px; }
.bar .grip { height: 4px; width: 24px; margin: 0 auto; }
.bar .ico { width: 6px; color: #ccc; }
.pitch { background: linear-gradient(90deg, #514e5a, #4a4a4b 5%, #4a4a4b 95%, #514e5a); border-left: 1px solid #e8a4a4; border-right: 1px dashed #aaa; border-bottom: 1px solid #111; }
.pitch svg { display: block; }
.notes { background: #383838; border-right: 2px solid #1d1d1d; display: flex; flex-direction: column; padding: 17px 0 4px; font-family: "Open Sans", "DejaVu Sans", sans-serif; }
.notes span { flex: 1; display: flex; align-items: center; gap: 3px; padding-left: 1px; white-space: nowrap; }
.notes i { width: 4px; height: 1px; background: #bbb; }
.trans { display: grid; grid-template-columns: 34% auto 1fr; align-items: center; height: 36px; flex: none; padding: 4px 0 0 3px; margin-bottom: -7px; }
.time { justify-self: start; font-size: 15px; line-height: 16px; }
.preview.t { padding: 0 0 0 3px; }
.zoomset { display: flex; justify-content: flex-end; gap: 12px; padding-right: 6px; }

.low { display: flex; height: 81px; flex: none; gap: 5px; }
.level { flex: 1; }
.level .body { padding: 4px 4px 0 5px; }
.meter { display: flex; justify-content: space-between; height: 37px; background: #000; border: 1px solid #5a5a5a; flex: none; }
.floor { width: 1px; background: #e6e600; margin-left: 1px; }
.clip { width: 10px; border-left: 1px solid #555; display: flex; flex-direction: column; }
.clip i { flex: 1; } .clip i + i { border-top: 1px solid #555; }
.lscale { padding: 0 11px 0 2px; }
.lscale svg { display: block; overflow: visible; height: 5px; }
.lnums { position: relative; display: flex; height: 12px; line-height: 12px; font-size: 10px; padding: 0 2.5%; }
.lnums span { flex: 1; text-align: center; }
.lnums .u { position: absolute; left: -3px; }
.lnums .z { position: absolute; right: -3px; }
.panel.sel { width: 310px; flex: none; }
.panel.sel table { margin-left: 10px; width: 235px; }
.panel.sel th, .panel.sel td { background: none; border: 0; height: 19px; padding: 0; line-height: 16px; width: 69px; }
.panel.sel tr > :first-child { width: 28px; }
.panel.sel a { display: inline-block; line-height: 13px; }

.status { display: flex; align-items: center; height: 20px; flex: none; margin: 0 1px; background: #404040; border: 1px solid #505050; font-family: "Open Sans", "Noto Sans CJK SC", sans-serif; }
.msg { flex: 1; padding-left: 6px; }
.s { height: 13px; line-height: 13px; border-left: 2px solid #272727; padding-left: 6px; white-space: nowrap; }
.w50 { width: 50px; } .w79 { width: 79px; } .w63 { width: 63px; } .w66 { width: 66px; } .w82 { width: 82px; } .w49 { width: 47px; }
.w188 { width: 188px; font-family: "Open Sans", "DejaVu Sans", "Noto Sans CJK SC", sans-serif; }
.s.r { text-align: right; padding-right: 8px; }

.arrow { position: absolute; left: 12px; top: 347px; pointer-events: none; }
.note { position: absolute; left: 68px; top: 366px; font-size: 37px; line-height: 52px; color: #ff3b3b; white-space: nowrap; }
.ime { position: absolute; right: 0; top: 646px; width: 138px; height: 30px; display: flex; align-items: center; justify-content: space-between; padding: 0 8px; background: #333; border-radius: 4px 0 0 4px; color: #ccc; }
.zh { color: #0a9cee; font-size: 30px; line-height: 30px; }
.pt { font-size: 22px; line-height: 26px; }
.half { font-size: 22px; line-height: 26px; }
.mark { position: absolute; right: 10px; bottom: 9px; font-size: 15px; line-height: 22px; color: #ffffffa8; white-space: nowrap; }
</style>
